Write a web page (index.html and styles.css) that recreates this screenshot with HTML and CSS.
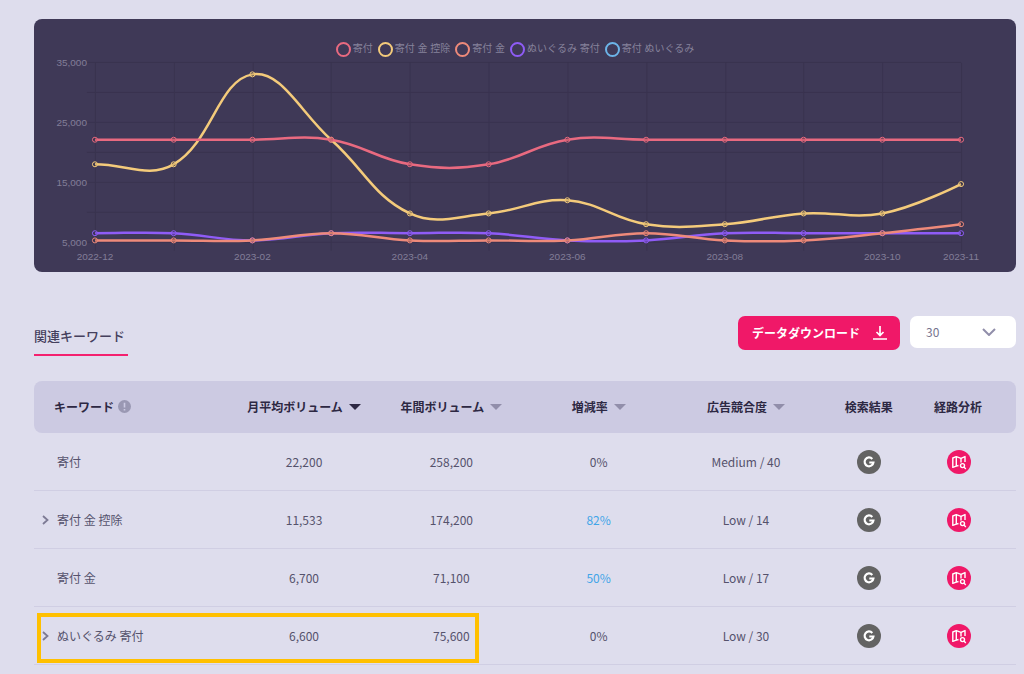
FILE: index.html
```html
<!DOCTYPE html>
<html lang="ja">
<head>
<meta charset="utf-8">
<meta name="viewport" content="width=device-width, initial-scale=1">
<title>関連キーワード</title>
<link rel="stylesheet" href="styles.css">
</head>
<body>
<svg class="symbols" aria-hidden="true">
  <symbol id="chevron" viewBox="0 0 7 10"><path d="M1 1l4.500 4L1 9" fill="none" stroke="currentColor" stroke-width="1.800"/></symbol>
  <symbol id="sort" viewBox="0 0 12 6"><path d="M0 0h12L6 6z" fill="currentColor"/></symbol>
  <symbol id="google" viewBox="0 0 24 24">
    <circle cx="12" cy="12" r="12" fill="#636363"/>
    <path d="M15.300 8.900A4.400 4.400 0 1 0 16.400 12.500H12.300" fill="none" stroke="#fff" stroke-width="2.200"/>
  </symbol>
  <symbol id="route" viewBox="0 0 24 24">
    <circle cx="12" cy="12" r="12" fill="#f01868"/>
    <g fill="none" stroke="#fff" stroke-width="1.400" stroke-linejoin="round">
      <path d="M11.500 15.500L9.300 16.200L5.800 17.400V8L9.300 6.600L14 8.300L18 6.600V12"/>
      <path d="M9.300 6.600V16.200M14 8.300V12.500"/>
      <circle cx="15.500" cy="15.600" r="2"/>
      <path d="M17 17.100L18.800 18.900"/>
    </g>
  </symbol>
</svg>
<main class="page">
  <section class="chart" aria-label="検索ボリューム推移">
    <ul class="legend">
      <li class="legend-item red">寄付</li>
      <li class="legend-item yellow">寄付 金 控除</li>
      <li class="legend-item coral">寄付 金</li>
      <li class="legend-item purple">ぬいぐるみ 寄付</li>
      <li class="legend-item blue">寄付 ぬいぐるみ</li>
    </ul>
    <svg class="plot" id="plot" viewBox="0 0 983 213" role="img"></svg>
  </section>

  <div class="toolbar">
    <h2 class="title">関連キーワード</h2>
    <div class="actions">
      <button class="download" type="button">データダウンロード
        <svg width="14" height="14" viewBox="0 0 14 14" aria-hidden="true"><path d="M7 0v9M3.500 6L7 9.500L10.500 6M0 13h14" fill="none" stroke="currentColor" stroke-width="1.700"/></svg>
      </button>
      <div class="page-size">
        <select class="page-size-select" aria-label="表示件数"><option>30</option><option>50</option><option>100</option></select>
        <svg class="page-size-arrow" viewBox="0 0 14 8" aria-hidden="true"><path d="M1 1l6 6l6-6" fill="none" stroke="currentColor" stroke-width="2"/></svg>
      </div>
    </div>
  </div>

  <table class="keywords">
    <colgroup><col class="c-key"><col class="c-num"><col class="c-num"><col class="c-num"><col class="c-num"><col class="c-icon"><col class="c-icon"></colgroup>
    <thead>
      <tr>
        <th class="key"><span class="head">キーワード <svg class="info" viewBox="0 0 12 12" aria-hidden="true"><circle cx="6" cy="6" r="6" fill="#9a98b3"/><path d="M6 2.500v4.500M6 8.200v1.500" stroke="#cccae2" stroke-width="1.500"/></svg></span></th>
        <th><button class="head sorted" type="button">月平均ボリューム<svg class="sort"><use href="#sort"/></svg></button></th>
        <th><button class="head" type="button">年間ボリューム<svg class="sort"><use href="#sort"/></svg></button></th>
        <th><button class="head" type="button">増減率<svg class="sort"><use href="#sort"/></svg></button></th>
        <th><button class="head" type="button">広告競合度<svg class="sort"><use href="#sort"/></svg></button></th>
        <th>検索結果</th>
        <th class="last">経路分析</th>
      </tr>
    </thead>
    <tbody>
      <tr>
        <td class="key"><span class="word">寄付</span></td>
        <td>22,200</td><td>258,200</td><td>0%</td><td>Medium / 40</td>
        <td><a class="icon" href="#" aria-label="検索結果"><svg><use href="#google"/></svg></a></td>
        <td class="last"><a class="icon" href="#" aria-label="経路分析"><svg><use href="#route"/></svg></a></td>
      </tr>
      <tr>
        <td class="key"><button class="toggle" type="button" aria-label="展開"><svg><use href="#chevron"/></svg></button><span class="word">寄付 金 控除</span></td>
        <td>11,533</td><td>174,200</td><td class="up">82%</td><td>Low / 14</td>
        <td><a class="icon" href="#" aria-label="検索結果"><svg><use href="#google"/></svg></a></td>
        <td class="last"><a class="icon" href="#" aria-label="経路分析"><svg><use href="#route"/></svg></a></td>
      </tr>
      <tr>
        <td class="key"><span class="word">寄付 金</span></td>
        <td>6,700</td><td>71,100</td><td class="up">50%</td><td>Low / 17</td>
        <td><a class="icon" href="#" aria-label="検索結果"><svg><use href="#google"/></svg></a></td>
        <td class="last"><a class="icon" href="#" aria-label="経路分析"><svg><use href="#route"/></svg></a></td>
      </tr>
      <tr class="marked">
        <td class="key"><span class="marker"></span><button class="toggle" type="button" aria-label="展開"><svg><use href="#chevron"/></svg></button><span class="word">ぬいぐるみ 寄付</span></td>
        <td>6,600</td><td>75,600</td><td>0%</td><td>Low / 30</td>
        <td><a class="icon" href="#" aria-label="検索結果"><svg><use href="#google"/></svg></a></td>
        <td class="last"><a class="icon" href="#" aria-label="経路分析"><svg><use href="#route"/></svg></a></td>
      </tr>
    </tbody>
  </table>
</main>
<script src="chart.js"></script>
</body>
</html>
```
FILE: styles.css
```css
*, *::before { box-sizing: border-box; }

body {
  margin: 0;
  background: #dedded;
  color: #55526c;
  font: 12px/18px "Noto Sans CJK JP", sans-serif;
}

button { border: 0; padding: 0; background: none; color: inherit; font: inherit; cursor: pointer; }

.symbols { position: absolute; width: 0; height: 0; }

.page { padding: 19px 8px 8px 34px; }

.chart {
  padding-top: 12px;
  border-radius: 8px;
  background: #3f3957;
}

.legend {
  display: flex;
  justify-content: center;
  gap: 5px;
  height: 28px;
  margin: 0;
  padding: 8px 20px 0 0;
  list-style: none;
  color: #86829b;
  font: 10px/20px "Liberation Sans", "Noto Sans CJK JP", sans-serif;
}

.legend-item { display: flex; align-items: center; gap: 2px; height: 20px; white-space: nowrap; }

.legend-item::before {
  content: "";
  width: 15px;
  height: 15px;
  border: 2px solid currentColor;
  border-radius: 50%;
}

.red::before { border-color: #e96a80; }
.yellow::before { border-color: #f4cb7b; }
.coral::before { border-color: #ee8a7a; }
.purple::before { border-color: #8f5cf7; }
.blue::before { border-color: #6cb4e8; }

.plot { display: block; width: 100%; height: auto; overflow: visible; }
.plot text { fill: #827e98; font: 10px "Liberation Sans", sans-serif; }
.grid { stroke: #39334f; stroke-width: 1; }
.line { fill: none; stroke-width: 2.5px; }
.dot { fill: rgba(0, 0, 0, 0.1); stroke-width: 1; }

.toolbar {
  display: flex;
  justify-content: space-between;
  align-items: flex-end;
  margin-top: 44px;
}

.title {
  margin: 0;
  padding: 0 3px 8px 0;
  border-bottom: 2px solid #f4216f;
  color: #45405d;
  font-size: 13px;
  font-weight: 500;
  line-height: 20px;
}

.actions { display: flex; gap: 10px; padding-bottom: 6px; }

.download {
  display: flex;
  align-items: center;
  gap: 13px;
  height: 34px;
  padding: 0 13px 0 14px;
  border-radius: 7px;
  background: #f01868;
  color: #fff;
  font-weight: 700;
}

.page-size { position: relative; width: 106px; height: 32px; }

.page-size-select {
  width: 100%;
  height: 100%;
  padding: 0 16px;
  border: 0;
  border-radius: 7px;
  background: #fff;
  color: #77748e;
  font: inherit;
  appearance: none;
}

.page-size-arrow {
  position: absolute;
  top: 12px;
  right: 20px;
  width: 14px;
  height: 8px;
  color: #918eaa;
  pointer-events: none;
}

.keywords {
  width: 100%;
  margin-top: 25px;
  border-spacing: 0;
  table-layout: fixed;
}

.c-key { width: 20%; }
.c-num { width: 15%; }
.c-icon { width: 10%; }

.keywords th {
  height: 52px;
  padding: 0;
  background: #cccae2;
  color: #2d2843;
  font-weight: 700;
  text-align: center;
}

.keywords th:first-child { padding-left: 20px; border-radius: 8px 0 0 8px; }
.keywords th:last-child { border-radius: 0 8px 8px 0; }
.keywords .last { padding-right: 18px; }

.head { display: inline-flex; align-items: center; gap: 6px; vertical-align: top; }
.key .head { gap: 4px; }
.keywords .key { text-align: left; }

.info { width: 13px; height: 13px; }
.sort { width: 12px; height: 6px; color: #918eaa; }
.sorted .sort { color: #2d2843; }

.keywords td {
  height: 58px;
  padding: 1px 0 0;
  border-bottom: 1px solid #d0cee3;
  text-align: center;
}

.keywords td.key { padding-left: 23px; }
.keywords td.up { color: #42a5e8; }
.keywords td.last { padding-right: 16px; }

.toggle {
  width: 15px;
  height: 18px;
  margin-left: -15px;
  text-align: left;
  vertical-align: top;
}

.toggle svg { display: block; width: 7px; height: 10px; color: #7d7a94; }
.word { vertical-align: top; }

.icon { display: inline-block; vertical-align: top; }
.icon svg { display: block; width: 24px; height: 24px; }

.marked { position: relative; }

.marker {
  position: absolute;
  top: 6px;
  bottom: 2px;
  left: 3px;
  width: 45%;
  border: 4px solid #ffc000;
  pointer-events: none;
}
```
FILE: chart.js
```js
const NS = "http://www.w3.org/2000/svg";
const plot = document.getElementById("plot");
const area = { left: 61, right: 928, top: 4, bottom: 184 };
const range = { min: 5000, max: 35000 };
const months = ["2022-12", "", "2023-02", "", "2023-04", "", "2023-06", "", "2023-08", "", "2023-10", "2023-11"];

const series = [
  { color: "#8f5cf7", data: [6600, 6600, 5400, 6600, 6600, 6600, 5400, 5400, 6600, 6600, 6600, 6600] },
  { color: "#ee8a7a", data: [5400, 5400, 5400, 6600, 5400, 5400, 5400, 6600, 5400, 5400, 6600, 8100] },
  { color: "#f4cb7b", data: [18100, 18100, 33100, 22200, 9900, 9900, 12100, 8100, 8100, 9900, 9900, 14800] },
  { color: "#e96a80", data: [22200, 22200, 22200, 22200, 18100, 18100, 22200, 22200, 22200, 22200, 22200, 22200] }
];

function add(name, attrs, text) {
  const el = document.createElementNS(NS, name);
  for (const key in attrs) el.setAttribute(key, attrs[key]);
  if (text) el.textContent = text;
  plot.appendChild(el);
}

const xAt = i => area.left + (area.right - area.left) * i / (months.length - 1);
const yAt = v => area.bottom - (area.bottom - area.top) * (v - range.min) / (range.max - range.min);

for (let v = range.min; v <= range.max; v += 5000) {
  const y = Math.round(yAt(v)) - 0.5;
  add("line", { class: "grid", x1: area.left - 8, x2: area.right, y1: y, y2: y });
  if (v % 10000 === 5000) {
    add("text", { x: area.left - 8, y: yAt(v) + 3, "text-anchor": "end" }, v.toLocaleString("en-US"));
  }
}

months.forEach((label, i) => {
  const x = Math.round(xAt(i)) + 0.5;
  add("line", { class: "grid", x1: x, x2: x, y1: area.top, y2: area.bottom + 8 });
  if (label) add("text", { x: xAt(i), y: area.bottom + 17, "text-anchor": "middle" }, label);
});

// Cubic spline whose handles follow the chord between neighbouring points.
function spline(points, tension) {
  const handles = points.map((p, i) => {
    const a = points[i - 1] || p;
    const b = points[i + 1] || p;
    const before = Math.hypot(p.x - a.x, p.y - a.y);
    const after = Math.hypot(b.x - p.x, b.y - p.y);
    const fa = tension * before / (before + after);
    const fb = tension * after / (before + after);
    return {
      inX: p.x - fa * (b.x - a.x), inY: p.y - fa * (b.y - a.y),
      outX: p.x + fb * (b.x - a.x), outY: p.y + fb * (b.y - a.y)
    };
  });
  let d = `M${points[0].x} ${points[0].y}`;
  for (let i = 1; i < points.length; i++) {
    const h = handles[i - 1];
    const k = handles[i];
    // The first point leaves level; the last one is reached directly.
    const start = i === 1 ? { x: h.outX, y: points[0].y } : { x: h.outX, y: h.outY };
    const end = i === points.length - 1 ? points[i] : { x: k.inX, y: k.inY };
    d += `C${start.x} ${start.y} ${end.x} ${end.y} ${points[i].x} ${points[i].y}`;
  }
  return d;
}

const lines = series.map(s => ({ color: s.color, points: s.data.map((v, i) => ({ x: xAt(i), y: yAt(v) })) }));

lines.forEach(l => {
  add("path", { class: "line", stroke: l.color, d: spline(l.points, 0.4) });
  l.points.forEach(p => add("circle", { class: "dot", stroke: l.color, cx: p.x, cy: p.y, r: 2.5 }));
});
```
